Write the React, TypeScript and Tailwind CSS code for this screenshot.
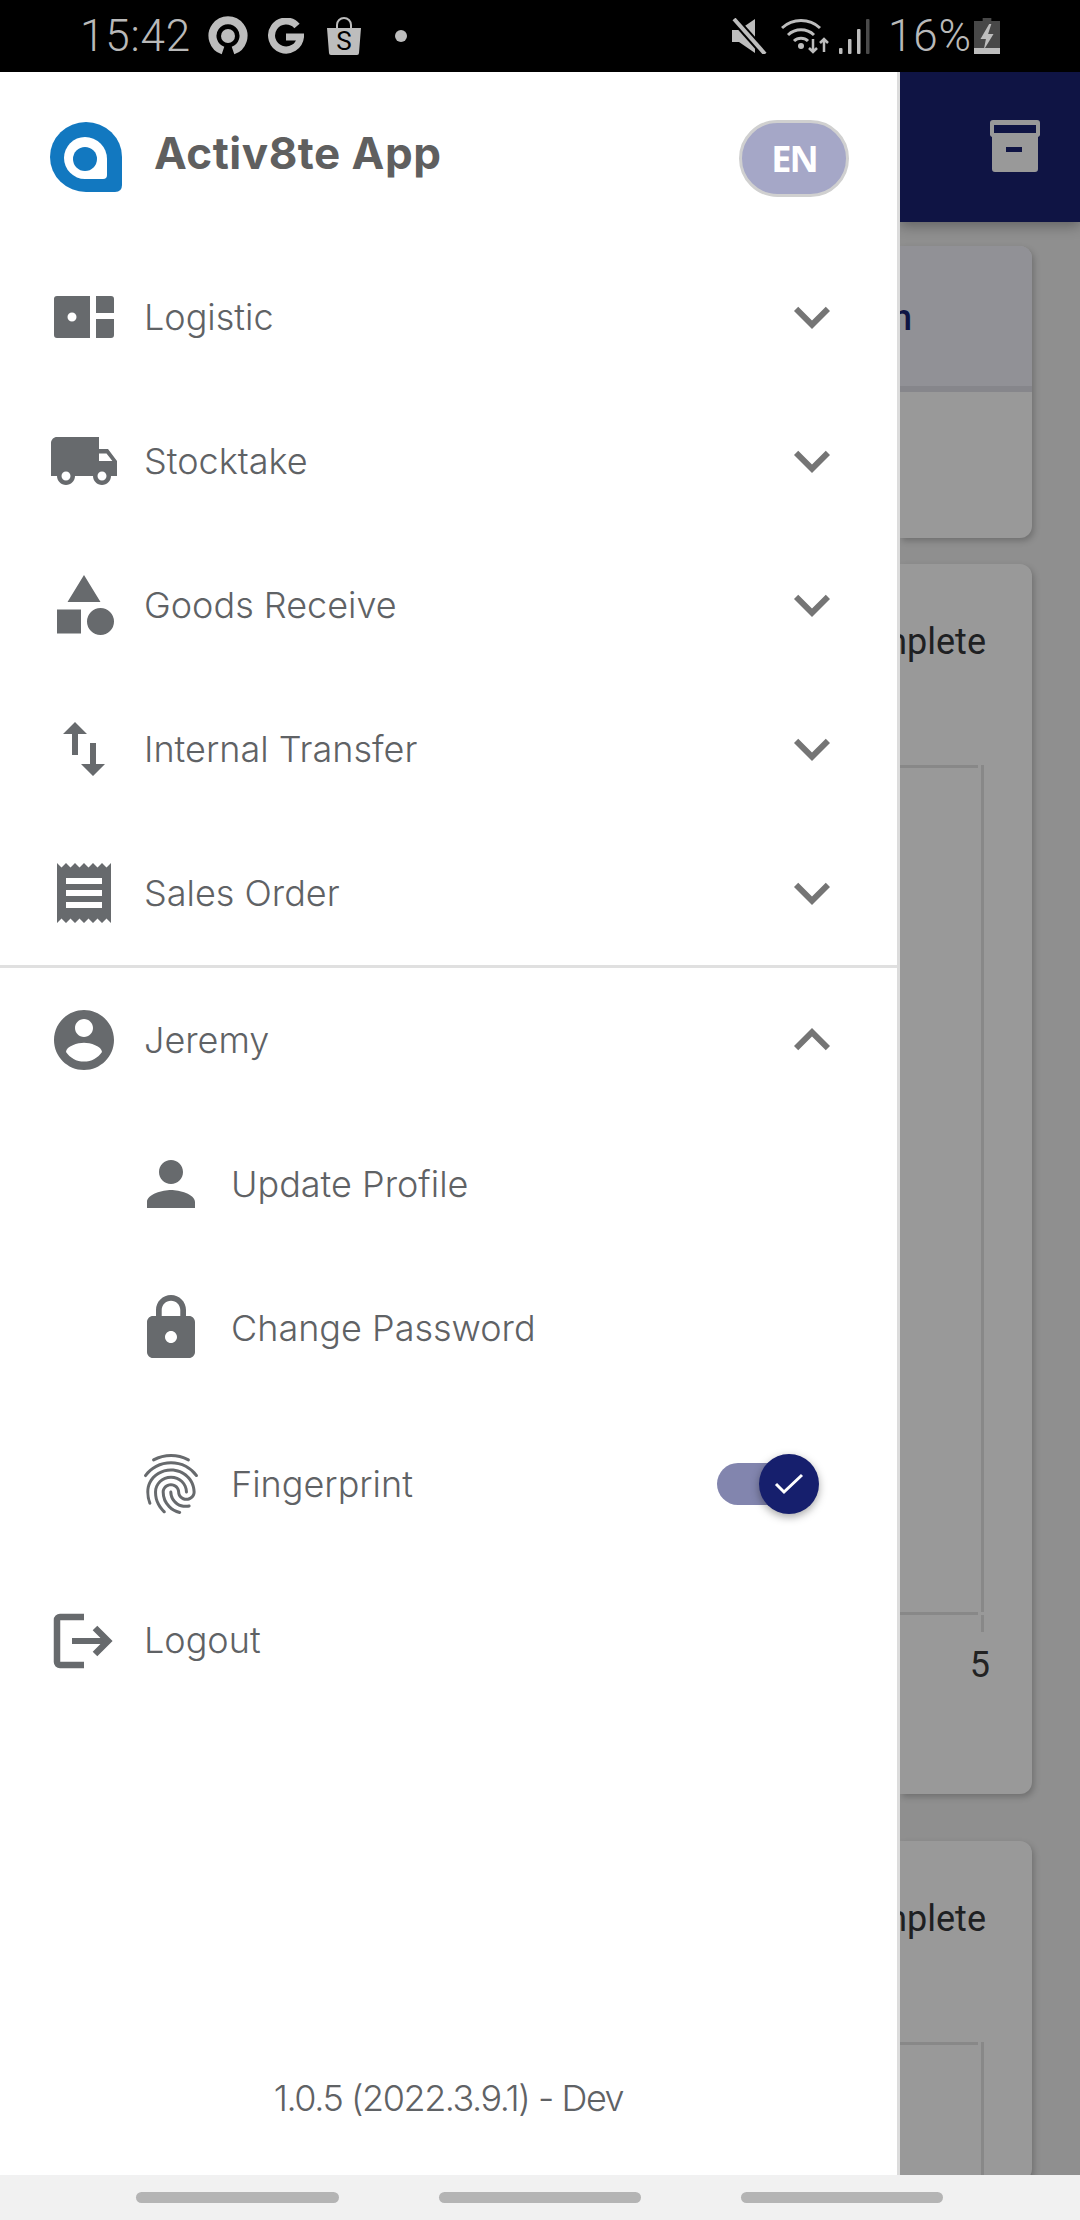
import React from 'react';
import { MdFingerprint } from 'react-icons/md';

const ICON_PATHS = {
    truck: 'M20 8h-3V4H3c-1.1 0-2 .9-2 2v11h2c0 1.66 1.34 3 3 3s3-1.34 3-3h6c0 1.66 1.34 3 3 3s3-1.34 3-3h2v-5l-3-4zM6 18.5c-.83 0-1.5-.67-1.5-1.5s.67-1.5 1.5-1.5 1.5.67 1.5 1.5-.67 1.5-1.5 1.5zm13.5-9l1.96 2.5H17V9.5h2.5zm-1.5 9c-.83 0-1.5-.67-1.5-1.5s.67-1.5 1.5-1.5 1.5.67 1.5 1.5-.67 1.5-1.5 1.5z',
    shapes: 'M12 2l-5.5 9h11zM17.5 13a4.5 4.5 0 1 0 0 9 4.5 4.5 0 0 0 0-9zM3 13.5h8v8H3z',
    swap: 'M16 17.01V10h-2v7.01h-3L15 21l4-3.99h-3zM9 3L5 6.99h3V14h2V6.99h3L9 3z',
    receipt: 'M18 17H6v-2h12v2zm0-4H6v-2h12v2zm0-4H6V7h12v2zM3 22l1.5-1.5L6 22l1.5-1.5L9 22l1.5-1.5L12 22l1.5-1.5L15 22l1.5-1.5L18 22l1.5-1.5L21 22V2l-1.5 1.5L18 2l-1.5 1.5L15 2l-1.5 1.5L12 2l-1.5 1.5L9 2 7.5 3.5 6 2 4.5 3.5 3 2v20z',
    account: 'M12 2C6.48 2 2 6.48 2 12s4.48 10 10 10 10-4.48 10-10S17.52 2 12 2zm0 3c1.66 0 3 1.34 3 3s-1.34 3-3 3-3-1.34-3-3 1.34-3 3-3zm0 14.2c-2.5 0-4.71-1.28-6-3.22.03-1.99 4-3.08 6-3.08 1.99 0 5.97 1.09 6 3.08-1.29 1.94-3.5 3.22-6 3.22z',
    person: 'M12 12c2.21 0 4-1.79 4-4s-1.79-4-4-4-4 1.79-4 4 1.79 4 4 4zm0 2c-2.67 0-8 1.34-8 4v2h16v-2c0-2.66-5.33-4-8-4z',
    lock: 'M18 8h-1V6c0-2.76-2.24-5-5-5S7 3.24 7 6v2H6c-1.1 0-2 .9-2 2v10c0 1.1.9 2 2 2h12c1.1 0 2-.9 2-2V10c0-1.1-.9-2-2-2zm-6 9c-1.1 0-2-.9-2-2s.9-2 2-2 2 .9 2 2-.9 2-2 2zm3.1-9H8.9V6c0-1.71 1.39-3.1 3.1-3.1 1.71 0 3.1 1.39 3.1 3.1v2z',
    chevronDown: 'M16.59 8.59L12 13.17 7.41 8.59 6 10l6 6 6-6z',
    chevronUp: 'M12 8l-6 6 1.41 1.41L12 10.83l4.59 4.58L18 14z',
};

const MaterialIcon: React.FC<{ d: string; className?: string }> = ({ d, className = 'text-[#676a6d]' }) => (
    <svg viewBox="0 0 24 24" fill="currentColor" className={`h-[72px] w-[72px] shrink-0 ${className}`}>
        <path d={d} />
    </svg>
);

const LogisticIcon = () => (
    <svg viewBox="0 0 72 72" className="h-[72px] w-[72px] shrink-0 text-[#676a6d]">
        <path fill="currentColor" fillRule="evenodd" d="M9 15h33v42H9a3 3 0 0 1-3-3V18a3 3 0 0 1 3-3zM24 31.500a4.500 4.500 0 1 0 0 9 4.500 4.500 0 0 0 0-9z" />
        <path fill="currentColor" d="M48 15h15a3 3 0 0 1 3 3v14H48zM48 38h18v16a3 3 0 0 1-3 3H48z" />
    </svg>
);

const LogoutIcon = () => (
    <svg viewBox="0 0 72 72" fill="none" stroke="currentColor" className="h-[72px] w-[72px] shrink-0 text-[#676a6d]">
        <path strokeWidth="6.500" d="M36 13H12a3 3 0 0 0-3 3v42a3 3 0 0 0 3 3h24" />
        <path strokeWidth="6" d="M24 37h34" />
        <path strokeWidth="6.500" d="M47 24l13 13-13 13" />
    </svg>
);

const Logo = () => (
    <svg viewBox="0 0 72 70" className="-mt-[3px] h-[70px] w-[72px] shrink-0 blur-[0.7px]">
        <path fill="#1278c0" d="M36 0a36 35 0 0 1 36 35v28q0 7-7 7H36a36 35 0 0 1 0-70z" />
        <path fill="#ffffff" d="M35 15a22 22 0 0 1 22 22v16q0 4-4 4H35a21 21 0 0 1 0-42z" />
        <circle cx="35" cy="37" r="12" fill="#1278c0" />
    </svg>
);

const MenuRow: React.FC<{ icon: React.ReactNode; label: string; chevron?: 'up' | 'down' }> = ({ icon, label, chevron }) => (
    <div className="flex h-[144px] items-center pl-[48px] pr-[49px]">
        {icon}
        <span className="ml-[24px] flex-1 text-[36px] font-light text-[#5f6265]">{label}</span>
        {chevron && <MaterialIcon d={chevron === 'up' ? ICON_PATHS.chevronUp : ICON_PATHS.chevronDown} className="text-[#757575]" />}
    </div>
);

const SubRow: React.FC<{ icon: React.ReactNode; label: string; className?: string; children?: React.ReactNode }> = ({
    icon,
    label,
    className = 'h-[144px]',
    children,
}) => (
    <div className={`flex items-center pl-[135px] pr-[78px] ${className}`}>
        {icon}
        <span className="ml-[24px] flex-1 text-[36px] font-light text-[#5f6265]">{label}</span>
        {children}
    </div>
);

const StatusBar = () => (
    <div className="flex h-[72px] shrink-0 items-center bg-black pl-[80px] font-['Roboto',sans-serif] text-[#b9b9b9]">
        <span className="w-[118px] text-[44px] font-light tracking-[0.8px]">15:42</span>
        {/* ride hailing app */}
        <svg viewBox="0 0 40 40" className="ml-[10px] h-[40px] w-[40px]">
            <path fill="none" stroke="#bdbdbd" strokeWidth="8" d="M15 34.500A15.500 15.500 0 1 1 25 34.500" />
            <circle cx="20" cy="20" r="7" fill="#bdbdbd" />
        </svg>
        <svg viewBox="0 0 36 36" className="ml-[20px] h-[36px] w-[36px]">
            <path fill="none" stroke="#bdbdbd" strokeWidth="7" d="M29 8A14.500 14.500 0 1 0 32.500 19H18" />
        </svg>
        <svg viewBox="0 0 36 38" className="ml-[22px] h-[38px] w-[36px]">
            <path fill="none" stroke="#bdbdbd" strokeWidth="2" d="M11 12V8a7 7 0 0 1 14 0v4" />
            <path fill="#bdbdbd" d="M1 11h34l-2 25q0 2-2 2H5q-2 0-2-2z" />
            <text x="18" y="33" textAnchor="middle" fontSize="26" fontFamily="Roboto, sans-serif" fill="#000000">S</text>
        </svg>
        <span className="ml-[33px] h-[12px] w-[12px] rounded-full bg-[#bdbdbd]" />
        <div className="flex-1" />
        {/* mute */}
        <svg viewBox="0 0 36 36" className="h-[36px] w-[36px]">
            <path fill="#bdbdbd" d="M1 12h7L24 1v34L8 24H1z" />
            <path stroke="#000000" strokeWidth="8" d="M2 0l32 36" />
            <path stroke="#bdbdbd" strokeWidth="4" d="M3 1l31 35" />
        </svg>
        {/* wifi with up/down arrows */}
        <svg viewBox="0 0 48 36" fill="none" stroke="#bdbdbd" className="ml-[14px] h-[36px] w-[48px]">
            <path strokeWidth="3" d="M1 10a28 28 0 0 1 38 0M7 17a19 19 0 0 1 26 0M13 23a10 10 0 0 1 14 0" />
            <circle cx="20" cy="28" r="3" fill="#bdbdbd" stroke="none" />
            <path strokeWidth="2.500" d="M32 21v13M28 30l4 4 4-4M43 34V21M39 25l4-4 4 4" />
        </svg>
        {/* signal */}
        <svg viewBox="0 0 32 36" className="ml-[9px] h-[36px] w-[32px]">
            <rect x="1" y="30" width="3.500" height="6" rx="1" fill="#bdbdbd" />
            <rect x="10" y="21" width="3.500" height="15" rx="1" fill="#bdbdbd" />
            <rect x="19" y="11" width="3.500" height="25" rx="1" fill="#bdbdbd" />
            <rect x="28" y="1" width="3.500" height="35" rx="1" fill="#4a4a4a" />
        </svg>
        <span className="ml-[18px] w-[86px] text-[44px] font-light tracking-[0.8px]">16%</span>
        {/* battery charging */}
        <svg viewBox="0 0 24 36" preserveAspectRatio="none" className="mr-[80px] h-[36px] w-[26px]">
            <path fill="#484848" d="M8 0h8v3h8v33H0V3h8z" />
            <rect y="30" width="24" height="6" fill="#bdbdbd" />
            <path fill="#bdbdbd" d="M14 6l-8 15h5l-2 11 9-16h-5l3-10z" />
        </svg>
    </div>
);

const ChartCard: React.FC<{ height: string; chartHeight: number; label: boolean }> = ({ height, chartHeight, label }) => (
    <div className={`mr-[48px] shrink-0 overflow-hidden rounded-r-xl bg-[#999999] shadow-[2px_3px_6px_rgba(0,0,0,0.22)] ${height}`}>
        <div className="flex h-[201px] justify-end whitespace-nowrap pr-[46px] pt-[50px] font-['Roboto',sans-serif] text-[36px] leading-[56px] text-[#1e2022]">
            Complete
        </div>
        {/* chart axes */}
        <svg width="132" height={chartHeight} className="block">
            <rect x="0" y="0" width="78" height="3" fill="#888888" />
            <rect x="81" y="0" width="3" height="847" fill="#888888" />
            <rect x="0" y="847" width="78" height="3" fill="#888888" />
            <rect x="81" y="850" width="3" height="17" fill="#888888" />
        </svg>
        {label && <div className="pr-[42px] pt-[12px] text-right font-['Roboto',sans-serif] text-[36px] leading-[42px] text-[#222222]">5</div>}
    </div>
);

const Backdrop = () => (
    <div className="flex min-w-0 flex-1 flex-col overflow-hidden bg-[#8f8f8f]">
        <div className="z-10 flex h-[150px] shrink-0 items-center justify-end bg-[#0f1444] pb-[2px] pr-[39px] shadow-[0_4px_12px_rgba(0,0,0,0.3)]">
            <svg viewBox="0 0 52 52" className="h-[52px] w-[52px]">
                <path fill="#999999" fillRule="evenodd" d="M4 0h44a3 3 0 0 1 3 3v12a3 3 0 0 1-2 2v32a3 3 0 0 1-3 3H6a3 3 0 0 1-3-3V17a3 3 0 0 1-2-2V3a3 3 0 0 1 3-3zM5 5v8h42V5zM17 27v5h16v-5z" />
            </svg>
        </div>
        <div className="mr-[48px] mt-[24px] h-[292px] shrink-0 overflow-hidden rounded-r-xl bg-[#999999] shadow-[2px_3px_6px_rgba(0,0,0,0.22)]">
            <div className="flex h-[146px] justify-end whitespace-nowrap border-b-[6px] border-[#86868b] bg-[#919196] pr-[120px] pt-[47px] font-['Roboto',sans-serif] text-[36px] font-medium leading-[50px] text-[#0f1444]">
                Transaction
            </div>
        </div>
        <div className="mt-[26px] flex flex-col">
            <ChartCard height="h-[1230px]" chartHeight={867} label />
        </div>
        <div className="mt-[47px] flex flex-col">
            <ChartCard height="h-[340px]" chartHeight={139} label={false} />
        </div>
    </div>
);

export default function App() {
    return (
        <div className="flex h-[2220px] w-[1080px] flex-col overflow-hidden font-['Inter',sans-serif]">
            <StatusBar />
            <div className="flex min-h-0 flex-1">
                {/* Drawer */}
                <div className="flex w-[900px] shrink-0 flex-col border-r-[3px] border-[#dcdcdc] bg-white">
                    <div className="flex h-[173px] shrink-0 items-center pl-[50px] pr-[48px]">
                        <Logo />
                        <span className="mb-[12px] ml-[32px] flex-1 text-[44px] font-bold tracking-[0.5px] text-[#5f5f5f]">Activ8te App</span>
                        <div className="flex h-[77px] w-[110px] items-center justify-center rounded-full border-[3px] border-[#d0d0d0] bg-[#a5a7c7] font-['Open_Sans',sans-serif] text-[36px] font-bold tracking-[-2px] text-white">
                            EN
                        </div>
                    </div>
                    <MenuRow icon={<LogisticIcon />} label="Logistic" chevron="down" />
                    <MenuRow icon={<MaterialIcon d={ICON_PATHS.truck} />} label="Stocktake" chevron="down" />
                    <MenuRow icon={<MaterialIcon d={ICON_PATHS.shapes} />} label="Goods Receive" chevron="down" />
                    <MenuRow icon={<MaterialIcon d={ICON_PATHS.swap} />} label="Internal Transfer" chevron="down" />
                    <MenuRow icon={<MaterialIcon d={ICON_PATHS.receipt} />} label="Sales Order" chevron="down" />
                    <div className="h-[3px] shrink-0 bg-[#e0e0e0]" />
                    <MenuRow icon={<MaterialIcon d={ICON_PATHS.account} />} label="Jeremy" chevron="up" />
                    <SubRow icon={<MaterialIcon d={ICON_PATHS.person} />} label="Update Profile" />
                    <SubRow icon={<MaterialIcon d={ICON_PATHS.lock} />} label="Change Password" />
                    <SubRow icon={<MdFingerprint className="h-[72px] w-[72px] shrink-0 text-[#676a6d]" />} label="Fingerprint" className="h-[168px]">
                        <div className="relative h-[60px] w-[102px]">
                            <div className="mt-[9px] h-[42px] w-[84px] rounded-full bg-[#8285ae]" />
                            <div className="absolute right-0 top-0 flex h-[60px] w-[60px] items-center justify-center rounded-full bg-[#161f6d] shadow-[0_3px_8px_rgba(0,0,0,0.35)]">
                                <svg viewBox="0 0 30 24" fill="none" stroke="white" strokeWidth="3" className="h-[24px] w-[30px]">
                                    <path d="M2 12l8 8L28 3" />
                                </svg>
                            </div>
                        </div>
                    </SubRow>
                    <MenuRow icon={<LogoutIcon />} label="Logout" />
                    <div className="flex-1" />
                    <div className="pb-[50px] text-center text-[36px] font-light tracking-[-1.45px] text-[#5f6265]">1.0.5 (2022.3.9.1) - Dev</div>
                </div>
                <Backdrop />
            </div>
            {/* Nav bar */}
            <div className="flex h-[45px] shrink-0 items-start justify-between bg-[#f1f1f1] pl-[136px] pr-[137px] pt-[17px]">
                <span className="h-[11px] w-[203px] rounded-full bg-[#b4b4b4]" />
                <span className="h-[11px] w-[202px] rounded-full bg-[#b4b4b4]" />
                <span className="h-[11px] w-[202px] rounded-full bg-[#b4b4b4]" />
            </div>
        </div>
    );
}
